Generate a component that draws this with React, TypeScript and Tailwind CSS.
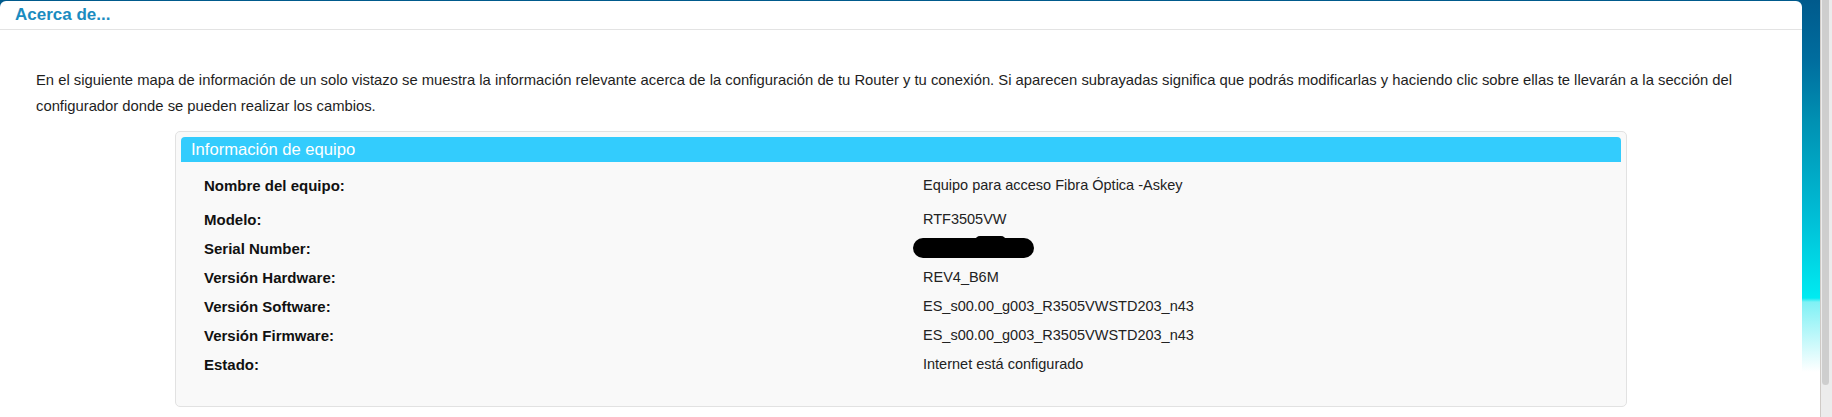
const rows: { label: string; value: string | null }[] = [
  { label: "Nombre del equipo:", value: "Equipo para acceso Fibra Óptica -Askey" },
  { label: "Modelo:", value: "RTF3505VW" },
  { label: "Serial Number:", value: null },
  { label: "Versión Hardware:", value: "REV4_B6M" },
  { label: "Versión Software:", value: "ES_s00.00_g003_R3505VWSTD203_n43" },
  { label: "Versión Firmware:", value: "ES_s00.00_g003_R3505VWSTD203_n43" },
  { label: "Estado:", value: "Internet está configurado" },
];

function Redacted() {
  return (
    <svg width="122" height="24" viewBox="0 0 122 24" className="-ml-[10px] mt-[1px] block">
      <rect x="0" y="3" width="121" height="20" rx="10" fill="#000" />
      <rect x="62" y="1" width="31" height="12" rx="5" fill="#000" />
    </svg>
  );
}

export default function App() {
  return (
    <div className="flex h-[417px] w-[1832px] overflow-hidden bg-[linear-gradient(to_bottom,#005a8c_0px,#006d9e_60px,#0090b2_120px,#00bfd7_220px,#00ebf1_298px,#7ff1f5_302px,#ffffff_372px)] font-['Liberation_Sans',Arial,sans-serif]">
      <div className="mt-[1px] flex w-[1802px] flex-col rounded-t-[6px] bg-white">
        <div className="h-[29px] border-b border-[#e3e3e3] pl-[15px] text-[17px] font-bold leading-[28px] text-[#1b8cc0]">
          Acerca de...
        </div>

        <p className="mt-[37px] pl-[36px] pr-[40px] text-[14.8px] leading-[26px] text-[#1e1e1e]">
          En el siguiente mapa de información de un solo vistazo se muestra la información relevante acerca de la
          configuración de tu Router y tu conexión. Si aparecen subrayadas significa que podrás modificarlas y haciendo
          clic sobre ellas te llevarán a la sección del configurador donde se pueden realizar los cambios.
        </p>

        <div className="mx-auto mt-[12px] w-[1452px] rounded-[5px] border border-[#e2e2e2] bg-[#f9f9f9] px-[5px] pt-[5px] pb-[27px]">
          <div className="h-[25px] rounded-t-[4px] bg-[#33ccfd] pl-[10px] pt-[2px] text-[16.6px] leading-[22px] text-white">
            Información de equipo
          </div>
          <div className="pt-[9px] pl-[23px]">
            {rows.map((row, i) => (
              <div
                key={row.label}
                className={`flex items-start leading-[29px] ${i === 0 ? "h-[34px]" : "h-[29px]"}`}
              >
                <span className="w-[719px] shrink-0 text-[15px] font-bold text-[#111]">{row.label}</span>
                {row.value ? (
                  <span className="text-[14.5px] text-[#222]">{row.value}</span>
                ) : (
                  <Redacted />
                )}
              </div>
            ))}
          </div>
        </div>
      </div>

      <div className="w-[18px]" />

      <div className="flex w-[12px] flex-col border-l border-[#cfcac6] bg-[#ececec] pl-[1px]">
        <div className="h-[385px] w-[7px] rounded-b-[4px] bg-[#cecece]" />
      </div>
    </div>
  );
}
